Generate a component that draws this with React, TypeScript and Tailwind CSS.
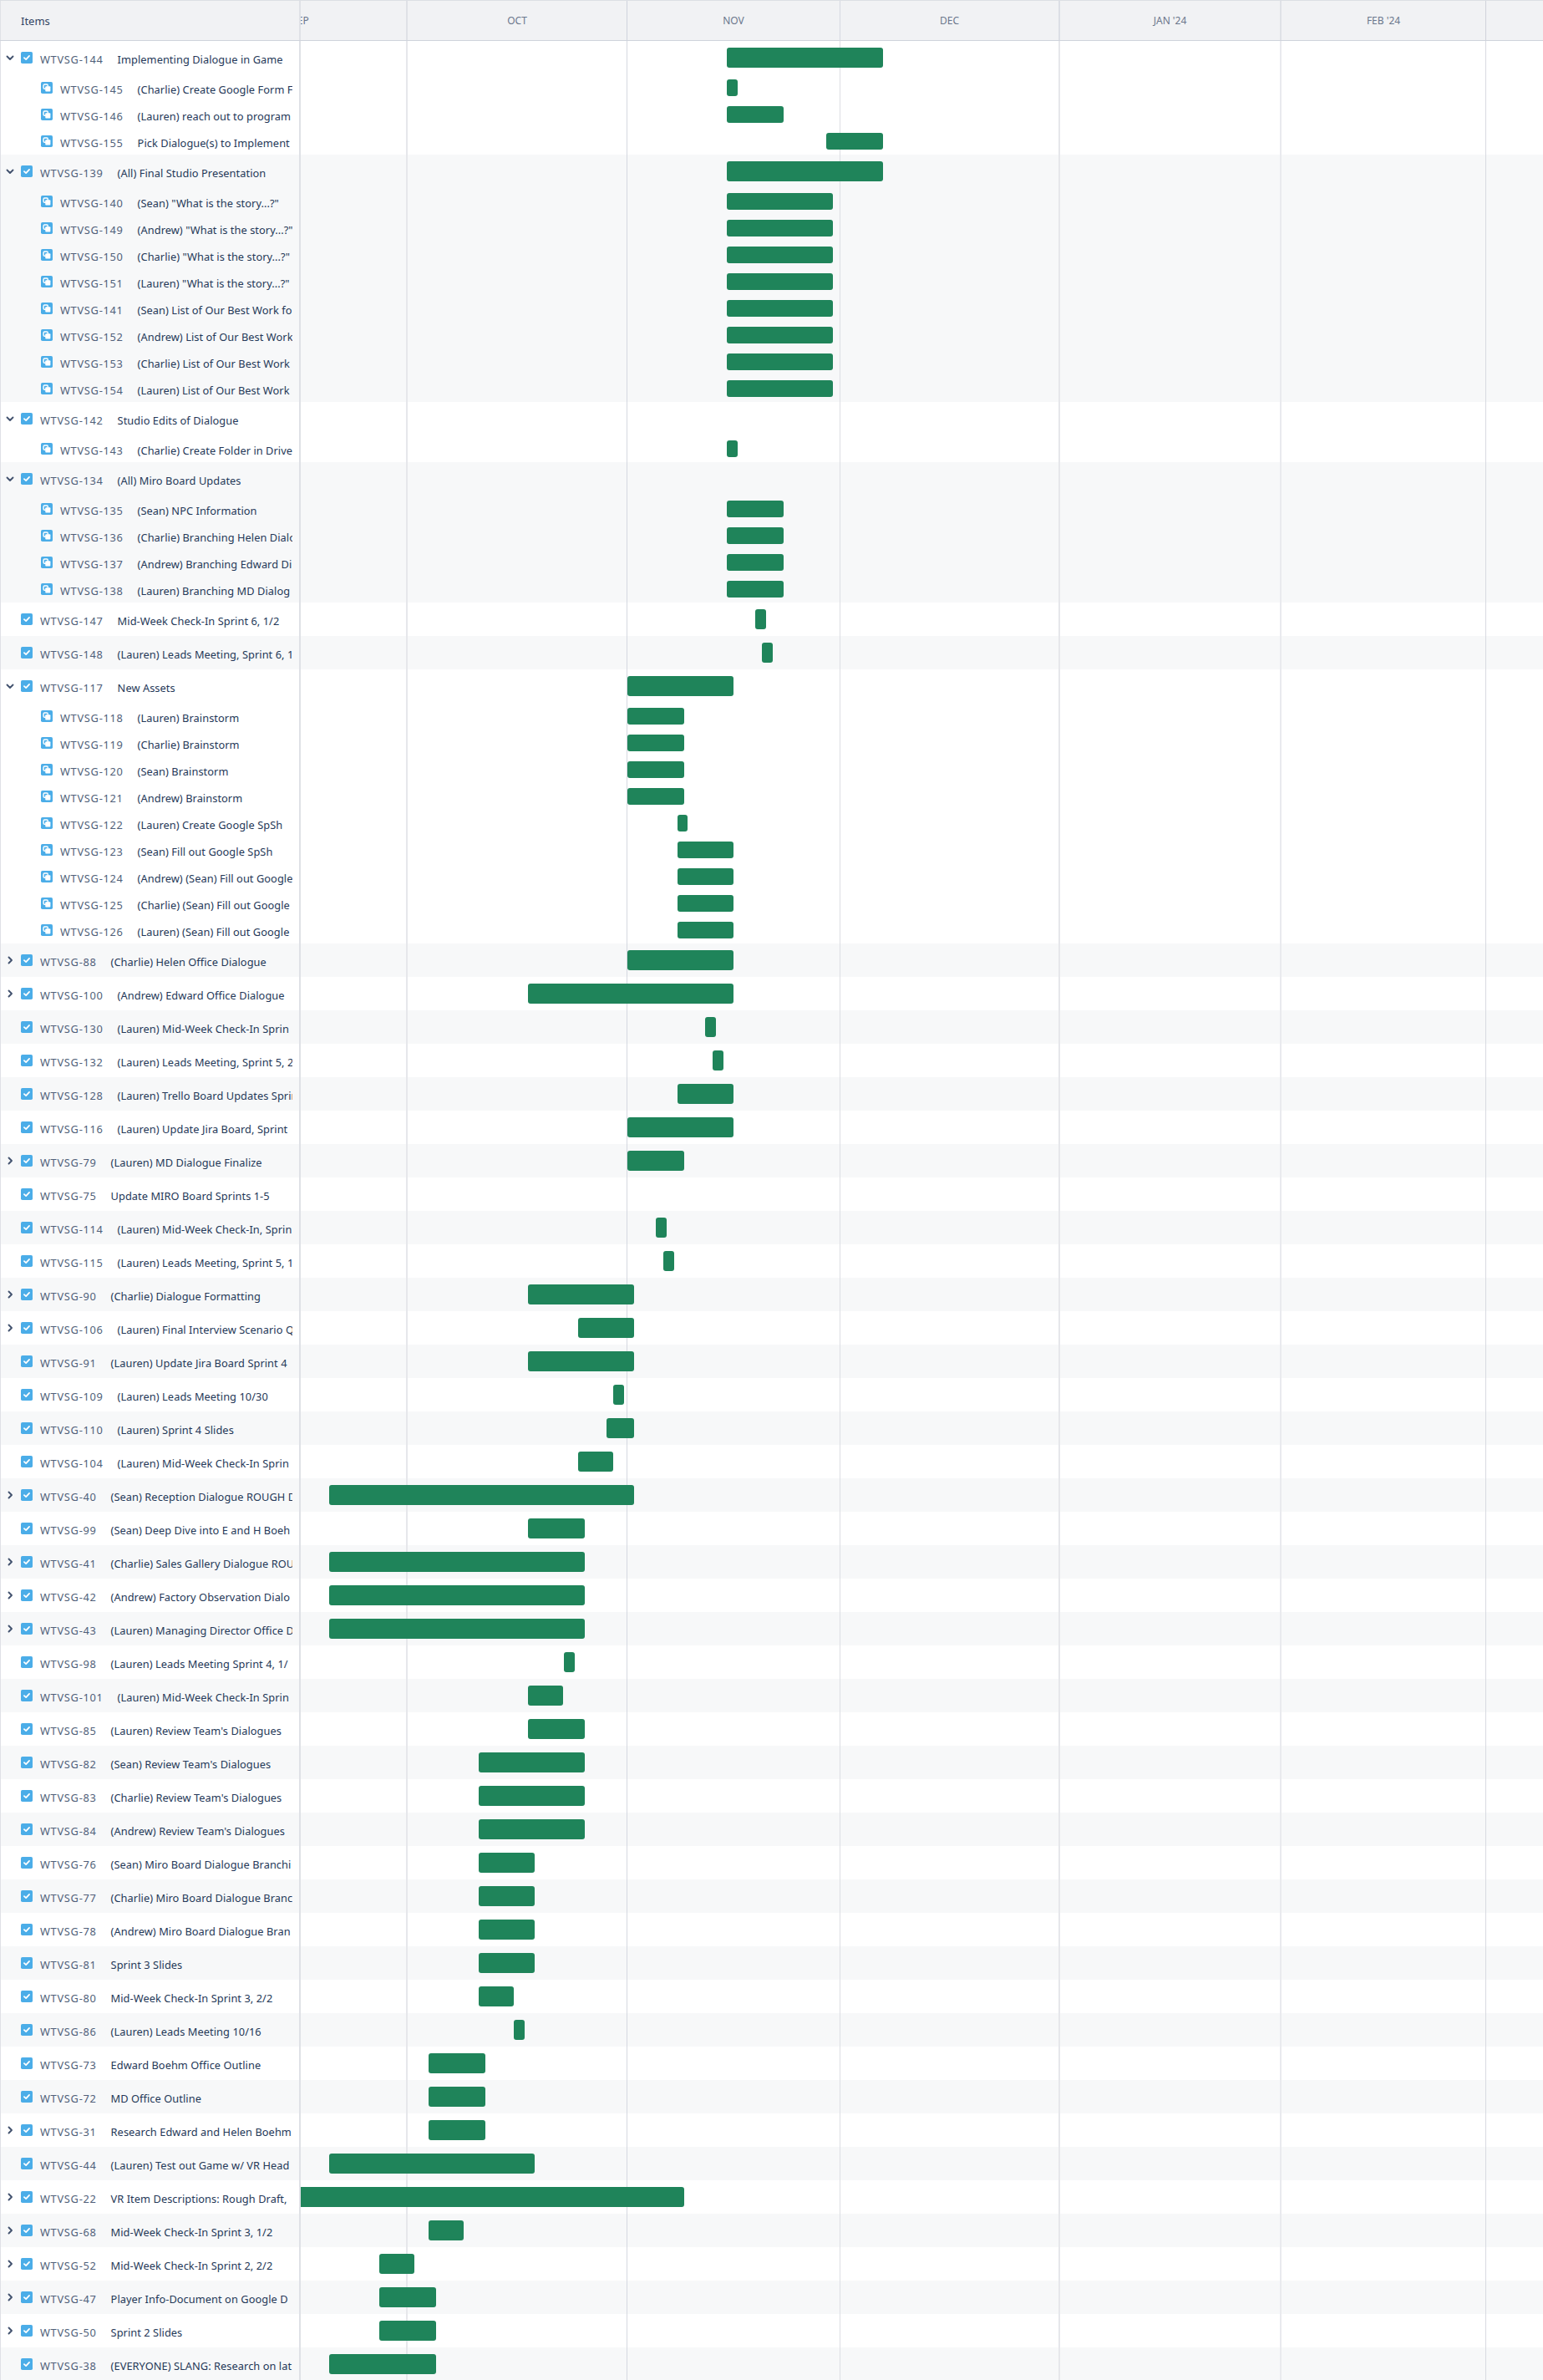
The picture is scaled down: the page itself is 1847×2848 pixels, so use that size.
import React from "react";

type Kind = "open" | "closed" | "leaf" | "sub";
type R = [Kind, string, string, number, number];

const rows: R[][] = [
  [
    ["open", "144", "Implementing Dialogue in Game", 870, 1057],
    ["sub", "145", "(Charlie) Create Google Form F", 870, 883],
    ["sub", "146", "(Lauren) reach out to program", 870, 938],
    ["sub", "155", "Pick Dialogue(s) to Implement", 989, 1057],
  ],
  [
    ["open", "139", "(All) Final Studio Presentation", 870, 1057],
    ["sub", "140", "(Sean) \"What is the story...?\"", 870, 997],
    ["sub", "149", "(Andrew) \"What is the story...?\"", 870, 997],
    ["sub", "150", "(Charlie) \"What is the story...?\"", 870, 997],
    ["sub", "151", "(Lauren) \"What is the story...?\"", 870, 997],
    ["sub", "141", "(Sean) List of Our Best Work fo", 870, 997],
    ["sub", "152", "(Andrew) List of Our Best Work", 870, 997],
    ["sub", "153", "(Charlie) List of Our Best Work", 870, 997],
    ["sub", "154", "(Lauren) List of Our Best Work", 870, 997],
  ],
  [
    ["open", "142", "Studio Edits of Dialogue", 0, 0],
    ["sub", "143", "(Charlie) Create Folder in Drive", 870, 883],
  ],
  [
    ["open", "134", "(All) Miro Board Updates", 0, 0],
    ["sub", "135", "(Sean) NPC Information", 870, 938],
    ["sub", "136", "(Charlie) Branching Helen Dialog", 870, 938],
    ["sub", "137", "(Andrew) Branching Edward Di", 870, 938],
    ["sub", "138", "(Lauren) Branching MD Dialog", 870, 938],
  ],
  [["leaf", "147", "Mid-Week Check-In Sprint 6, 1/2", 904, 917]],
  [["leaf", "148", "(Lauren) Leads Meeting, Sprint 6, 1", 912, 925]],
  [
    ["open", "117", "New Assets", 751, 878],
    ["sub", "118", "(Lauren) Brainstorm", 751, 819],
    ["sub", "119", "(Charlie) Brainstorm", 751, 819],
    ["sub", "120", "(Sean) Brainstorm", 751, 819],
    ["sub", "121", "(Andrew) Brainstorm", 751, 819],
    ["sub", "122", "(Lauren) Create Google SpSh", 811, 823],
    ["sub", "123", "(Sean) Fill out Google SpSh", 811, 878],
    ["sub", "124", "(Andrew) (Sean) Fill out Google", 811, 878],
    ["sub", "125", "(Charlie) (Sean) Fill out Google", 811, 878],
    ["sub", "126", "(Lauren) (Sean) Fill out Google", 811, 878],
  ],
  [["closed", "88", "(Charlie) Helen Office Dialogue", 751, 878]],
  [["closed", "100", "(Andrew) Edward Office Dialogue", 632, 878]],
  [["leaf", "130", "(Lauren) Mid-Week Check-In Sprin", 844, 857]],
  [["leaf", "132", "(Lauren) Leads Meeting, Sprint 5, 2", 853, 866]],
  [["leaf", "128", "(Lauren) Trello Board Updates Sprin", 811, 878]],
  [["leaf", "116", "(Lauren) Update Jira Board, Sprint", 751, 878]],
  [["closed", "79", "(Lauren) MD Dialogue Finalize", 751, 819]],
  [["leaf", "75", "Update MIRO Board Sprints 1-5", 0, 0]],
  [["leaf", "114", "(Lauren) Mid-Week Check-In, Sprin", 785, 798]],
  [["leaf", "115", "(Lauren) Leads Meeting, Sprint 5, 1", 794, 807]],
  [["closed", "90", "(Charlie) Dialogue Formatting", 632, 759]],
  [["closed", "106", "(Lauren) Final Interview Scenario Q", 692, 759]],
  [["leaf", "91", "(Lauren) Update Jira Board Sprint 4", 632, 759]],
  [["leaf", "109", "(Lauren) Leads Meeting 10/30", 734, 747]],
  [["leaf", "110", "(Lauren) Sprint 4 Slides", 726, 759]],
  [["leaf", "104", "(Lauren) Mid-Week Check-In Sprin", 692, 734]],
  [["closed", "40", "(Sean) Reception Dialogue ROUGH D", 394, 759]],
  [["leaf", "99", "(Sean) Deep Dive into E and H Boeh", 632, 700]],
  [["closed", "41", "(Charlie) Sales Gallery Dialogue ROU", 394, 700]],
  [["closed", "42", "(Andrew) Factory Observation Dialo", 394, 700]],
  [["closed", "43", "(Lauren) Managing Director Office D", 394, 700]],
  [["leaf", "98", "(Lauren) Leads Meeting Sprint 4, 1/", 675, 688]],
  [["leaf", "101", "(Lauren) Mid-Week Check-In Sprin", 632, 674]],
  [["leaf", "85", "(Lauren) Review Team's Dialogues", 632, 700]],
  [["leaf", "82", "(Sean) Review Team's Dialogues", 573, 700]],
  [["leaf", "83", "(Charlie) Review Team's Dialogues", 573, 700]],
  [["leaf", "84", "(Andrew) Review Team's Dialogues", 573, 700]],
  [["leaf", "76", "(Sean) Miro Board Dialogue Branchi", 573, 640]],
  [["leaf", "77", "(Charlie) Miro Board Dialogue Branc", 573, 640]],
  [["leaf", "78", "(Andrew) Miro Board Dialogue Bran", 573, 640]],
  [["leaf", "81", "Sprint 3 Slides", 573, 640]],
  [["leaf", "80", "Mid-Week Check-In Sprint 3, 2/2", 573, 615]],
  [["leaf", "86", "(Lauren) Leads Meeting 10/16", 615, 628]],
  [["leaf", "73", "Edward Boehm Office Outline", 513, 581]],
  [["leaf", "72", "MD Office Outline", 513, 581]],
  [["closed", "31", "Research Edward and Helen Boehm", 513, 581]],
  [["leaf", "44", "(Lauren) Test out Game w/ VR Head", 394, 640]],
  [["closed", "22", "VR Item Descriptions: Rough Draft,", 360, 819]],
  [["closed", "68", "Mid-Week Check-In Sprint 3, 1/2", 513, 555]],
  [["closed", "52", "Mid-Week Check-In Sprint 2, 2/2", 454, 496]],
  [["closed", "47", "Player Info-Document on Google D", 454, 522]],
  [["closed", "50", "Sprint 2 Slides", 454, 522]],
  [["leaf", "38", "(EVERYONE) SLANG: Research on lat", 394, 522]],
];

function CheckIcon() {
  return (
    <svg viewBox="0 0 16 16" className="w-[14px] h-[14px] shrink-0">
      <rect width="16" height="16" rx="2" fill="#4bade8" />
      <path d="M4.5 8.2 7 10.5 11.5 5.5" fill="none" stroke="#fff" strokeWidth="2" strokeLinecap="round" strokeLinejoin="round" />
    </svg>
  );
}

function SubIcon() {
  return (
    <svg viewBox="0 0 16 16" className="w-[14px] h-[14px] shrink-0">
      <rect width="16" height="16" rx="2" fill="#4bade8" />
      <rect x="3.5" y="3.5" width="6" height="6" rx="1.5" fill="none" stroke="#fff" strokeWidth="1.6" />
      <rect x="6" y="6" width="7" height="7" rx="1" fill="#fff" />
    </svg>
  );
}

function Chevron({ open }: { open: boolean }) {
  return (
    <svg viewBox="0 0 12 12" className="w-[12px] h-[12px] shrink-0">
      <path
        d={open ? "M2.5 4.5 6 8 9.5 4.5" : "M4.5 2.5 8 6 4.5 9.5"}
        fill="none"
        stroke="#42526e"
        strokeWidth="1.9"
        strokeLinecap="round"
        strokeLinejoin="round"
      />
    </svg>
  );
}

function Row({ row, shaded }: { row: R; shaded: boolean }) {
  const [kind, key, title, start, end] = row;
  const sub = kind === "sub";
  return (
    <div className={`flex ${sub ? "h-[32px]" : "h-[40px]"} ${shaded ? "bg-[#f7f8f9]" : "bg-white"}`}>
      <div className="w-[360px] shrink-0 border-l border-r-2 border-[#dfe1e6]">
        <div className={`flex items-center h-full w-[349px] overflow-hidden whitespace-nowrap ${sub ? "pl-[48px]" : "pl-[5px]"}`}>
          {!sub && (
            <div className="w-[19px] shrink-0">
              {kind !== "leaf" && <Chevron open={kind === "open"} />}
            </div>
          )}
          {sub ? <SubIcon /> : <CheckIcon />}
          <span className="ml-[9px] pt-[4px] tracking-[0.72px] text-[#505f79]">WTVSG-{key}</span>
          <span className="ml-[17px] pt-[4px] tracking-[0.06px] text-[#253858]">{title}</span>
        </div>
      </div>
      <div className="flex-1 flex items-center min-w-0">
        {end > 0 && (
          <div
            className={`relative z-10 bg-[#1f845a] ${start === 360 ? "rounded-r-[3px]" : "rounded-[3px]"} ${sub ? "h-[20px]" : "h-[24px]"}`}
            style={{ marginLeft: start - 360, width: end - start }}
          />
        )}
      </div>
    </div>
  );
}

const months = [
  { label: "SEP", w: "w-[255px]", line: "border-r-2 border-[#e6e7eb]", head: "border-r-2 border-[#dfe1e6]" },
  { label: "OCT", w: "w-[263px]", line: "border-r border-[#d5d8e0]", head: "border-r border-[#cfd3dc]" },
  { label: "NOV", w: "w-[255px]", line: "border-r border-[#dcdee3]", head: "border-r border-[#d5d8e0]" },
  { label: "DEC", w: "w-[263px]", line: "border-r-2 border-[#e6e7eb]", head: "border-r-2 border-[#dcdfe5]" },
  { label: "JAN '24", w: "w-[265px]", line: "border-r-2 border-[#e9eaee]", head: "border-r-2 border-[#dfe1e6]" },
  { label: "FEB '24", w: "w-[245px]", line: "border-r border-[#d8dae1]", head: "border-r border-[#d0d3db]" },
  { label: "", w: "w-[263px]", line: "", head: "" },
];

export default function App() {
  let shaded = true;
  return (
    <div className="relative w-[1847px] h-[2848px] overflow-hidden bg-white text-[12.8px] leading-[16px] font-['Noto_Sans',sans-serif]">
      <div className="flex h-[49px] bg-[#f1f2f4] border-t border-b border-t-[#dcdfe4] border-b-[#cfd3dc]">
        <div className="w-[360px] shrink-0 flex items-center pl-[24px] border-l border-r-2 border-[#dfe1e6] text-[13px] text-[#344563]">
          Items
        </div>
        <div className="flex-1 min-w-0 overflow-hidden">
          <div className="flex h-full -ml-[127px]">
            {months.map((m) => (
              <div
                key={m.label}
                className={`${m.w} ${m.head} shrink-0 flex items-center justify-center text-[12px] text-[#6b778c]`}
              >
                {m.label}
              </div>
            ))}
          </div>
        </div>
      </div>
      {rows.map((group) => {
        shaded = !shaded;
        const s = shaded;
        return group.map((r) => <Row key={r[1]} row={r} shaded={s} />);
      })}
      <div className="absolute top-[49px] bottom-0 left-[360px] right-0 overflow-hidden pointer-events-none">
        <div className="flex h-full -ml-[127px]">
          {months.map((m) => (
            <div key={m.label} className={`${m.w} ${m.line} shrink-0 h-full`} />
          ))}
        </div>
      </div>
    </div>
  );
}
